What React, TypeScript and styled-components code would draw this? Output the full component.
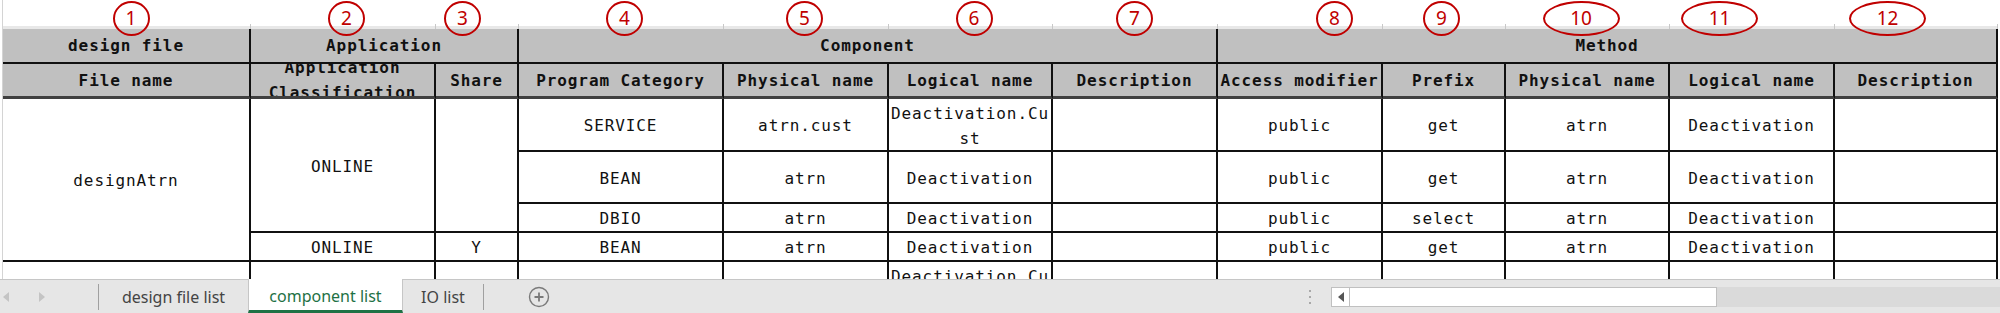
import styled, { createGlobalStyle } from 'styled-components';

const COLS = [248, 185, 83, 205, 165, 164, 165, 165, 123, 164, 165, 163];
const ROWS = [29, 35, 35, 53, 52, 29, 29, 53];

type Cell = { text: string; col: number; row: number; cs?: number; rs?: number };

const markers = [
	{ label: '1', shift: 4 },
	{ label: '2', shift: 3 },
	{ label: '3', shift: -15 },
	{ label: '4', shift: 3 },
	{ label: '5', shift: -2 },
	{ label: '6', shift: 3 },
	{ label: '7', shift: -1 },
	{ label: '8', shift: 34 },
	{ label: '9', shift: -3 },
	{ label: '10', shift: -7, wide: true },
	{ label: '11', shift: -33, wide: true },
	{ label: '12', shift: -29, wide: true },
];

const headTop: Cell[] = [
	{ text: 'design file', col: 1, row: 2 },
	{ text: 'Application', col: 2, row: 2, cs: 2 },
	{ text: 'Component', col: 4, row: 2, cs: 4 },
	{ text: 'Method', col: 8, row: 2, cs: 5 },
];

const headNames = [
	'File name', 'Application Classification', 'Share', 'Program Category', 'Physical name',
	'Logical name', 'Description', 'Access modifier', 'Prefix', 'Physical name', 'Logical name', 'Description',
];

const componentRow = (row: number, values: string[]): Cell[] =>
	values.map((text, i) => ({ text, col: 4 + i, row }));

const dataCells: Cell[] = [
	{ text: 'designAtrn', col: 1, row: 4, rs: 4 },
	{ text: 'ONLINE', col: 2, row: 4, rs: 3 },
	{ text: '', col: 3, row: 4, rs: 3 },
	...componentRow(4, ['SERVICE', 'atrn.cust', 'Deactivation.Cust', '', 'public', 'get', 'atrn', 'Deactivation', '']),
	...componentRow(5, ['BEAN', 'atrn', 'Deactivation', '', 'public', 'get', 'atrn', 'Deactivation', '']),
	...componentRow(6, ['DBIO', 'atrn', 'Deactivation', '', 'public', 'select', 'atrn', 'Deactivation', '']),
	{ text: 'ONLINE', col: 2, row: 7 },
	{ text: 'Y', col: 3, row: 7 },
	...componentRow(7, ['BEAN', 'atrn', 'Deactivation', '', 'public', 'get', 'atrn', 'Deactivation', '']),
	{ text: '', col: 1, row: 8 },
	{ text: '', col: 2, row: 8 },
	{ text: '', col: 3, row: 8 },
	...componentRow(8, ['SERVICE', 'atrn.cust', 'Deactivation.Cust', '', 'public', 'get', 'atrn', 'Deactivation', '']),
];

const GlobalStyle = createGlobalStyle`
	html, body {
		margin: 0;
		padding: 0;
		background: #fff;
	}
	body {
		width: 2000px;
		height: 313px;
		overflow: hidden;
	}
`;

const Page = styled.div`
	display: flex;
	flex-direction: column;
	width: 2000px;
	height: 313px;
`;

const SheetArea = styled.div`
	height: 279px;
	overflow: hidden;
	padding-left: 2px;
	background: #fff;
`;

const Grid = styled.div`
	display: grid;
	grid-template-columns: ${COLS.map((w) => `${w}px`).join(' ')};
	grid-template-rows: ${ROWS.map((h) => `${h}px`).join(' ')};
	border-left: 1px solid #d4d4d4;
	font-family: 'DejaVu Sans Mono', 'Liberation Mono', monospace;
	font-size: 16px;
	letter-spacing: 0.9px;
	color: #111;
`;

const Placed = styled.div<{ $col: number; $row: number; $cs?: number; $rs?: number }>`
	grid-column: ${(p) => `${p.$col} / span ${p.$cs ?? 1}`};
	grid-row: ${(p) => `${p.$row} / span ${p.$rs ?? 1}`};
	box-sizing: border-box;
	min-width: 0;
`;

const TopCell = styled(Placed)`
	position: relative;
	display: flex;
	justify-content: center;
	align-items: flex-start;
	background: linear-gradient(to bottom, #fff 0 26px, #e8e8e8 26px 29px);
	&::after {
		content: '';
		position: absolute;
		right: 0;
		bottom: 0;
		width: 1px;
		height: 5px;
		background: #c8c8c8;
	}
`;

const Marker = styled.span<{ $wide?: boolean; $shift: number }>`
	position: relative;
	z-index: 2;
	box-sizing: border-box;
	display: inline-flex;
	align-items: center;
	justify-content: center;
	width: ${(p) => (p.$wide ? 77 : 37)}px;
	height: 35px;
	margin-top: 1px;
	transform: translateX(${(p) => p.$shift}px);
	border: 2px solid #c00000;
	border-radius: 50%;
	color: #c00000;
	font-family: 'Noto Sans', 'Open Sans', sans-serif;
	font-size: 19px;
	letter-spacing: 0;
	line-height: 1;
`;

const Box = styled(Placed)`
	display: flex;
	align-items: center;
	justify-content: center;
	text-align: center;
	line-height: 25px;
	overflow: hidden;
	word-break: break-all;
	border-right: 2px solid #111;
`;

const HeadCell = styled(Box)<{ $thick?: boolean }>`
	background: #c0c0c0;
	font-weight: bold;
	word-break: normal;
	border-bottom: ${(p) => (p.$thick ? '3px solid #404040' : '2px solid #111')};
`;

const DataCell = styled(Box)`
	background: #fff;
	border-bottom: 2px solid #111;
	padding-top: 2px;
`;

const TabBar = styled.div`
	display: flex;
	align-items: stretch;
	height: 34px;
	box-sizing: border-box;
	background: #e6e6e6;
	border-top: 1px solid #c6c6c6;
	font-family: 'Noto Sans', 'Open Sans', sans-serif;
	font-size: 16px;
`;

const Nav = styled.div`
	display: flex;
	align-items: center;
	gap: 30px;
	width: 98px;
	padding-left: 3px;
	box-sizing: border-box;
`;

const Divider = styled.span`
	align-self: center;
	width: 1px;
	height: 26px;
	background: #a0a0a0;
`;

const Tab = styled.div<{ $active?: boolean; $width: number }>`
	display: flex;
	align-items: center;
	justify-content: center;
	width: ${(p) => p.$width}px;
	box-sizing: border-box;
	color: ${(p) => (p.$active ? '#1e7145' : '#444')};
	${(p) =>
		p.$active &&
		`
		margin-top: -1px;
		background: #fff;
		border-left: 1px solid #c6c6c6;
		border-right: 1px solid #c6c6c6;
		border-bottom: 3px solid #1e7145;
		padding-top: 3px;
	`}
`;

const AddButton = styled.div`
	display: flex;
	align-items: center;
	margin-left: 44px;
`;

const Spacer = styled.div`
	flex: 1;
`;

const Dots = styled.div`
	display: flex;
	flex-direction: column;
	justify-content: center;
	gap: 4px;
	width: 3px;
	margin-right: 19px;
	span {
		width: 2px;
		height: 2px;
		background: #a8a8a8;
	}
`;

const Scroll = styled.div`
	display: flex;
	align-self: center;
	width: 669px;
	height: 20px;
	background: #dadada;
`;

const ScrollButton = styled.div`
	display: flex;
	align-items: center;
	justify-content: center;
	width: 19px;
	box-sizing: border-box;
	background: #fff;
	border: 1px solid #c0c0c0;
`;

const Thumb = styled.div`
	width: 367px;
	box-sizing: border-box;
	background: #fff;
	border: 1px solid #c0c0c0;
	border-left: none;
`;

const Triangle = ({ dir, color }: { dir: 'left' | 'right'; color: string }) => (
	<svg width="6" height="10" viewBox="0 0 6 10">
		<path d={dir === 'left' ? 'M6 0 L0 5 L6 10 Z' : 'M0 0 L6 5 L0 10 Z'} fill={color} />
	</svg>
);

export default function App() {
	return (
		<Page>
			<GlobalStyle />
			<SheetArea>
				<Grid>
					{markers.map((m, i) => (
						<TopCell key={`t${i}`} $col={i + 1} $row={1}>
							<Marker $wide={m.wide} $shift={m.shift}>{m.label}</Marker>
						</TopCell>
					))}
					{headTop.map((c) => (
						<HeadCell key={`h1${c.col}`} $col={c.col} $row={c.row} $cs={c.cs}>{c.text}</HeadCell>
					))}
					{headNames.map((name, i) => (
						<HeadCell key={`h2${i}`} $col={i + 1} $row={3} $thick>{name}</HeadCell>
					))}
					{dataCells.map((c) => (
						<DataCell key={`d${c.row}-${c.col}`} $col={c.col} $row={c.row} $cs={c.cs} $rs={c.rs}>
							{c.text}
						</DataCell>
					))}
				</Grid>
			</SheetArea>
			<TabBar>
				<Nav>
					<Triangle dir="left" color="#c4c4c4" />
					<Triangle dir="right" color="#c4c4c4" />
				</Nav>
				<Divider />
				<Tab $width={149}>design file list</Tab>
				<Tab $width={155} $active>component list</Tab>
				<Tab $width={80}>IO list</Tab>
				<Divider />
				<AddButton>
					<svg width="22" height="22" viewBox="0 0 22 22">
						<circle cx="11" cy="11" r="9.5" fill="none" stroke="#7a7a7a" strokeWidth="1.4" />
						<path d="M11 6.5 V15.5 M6.5 11 H15.5" stroke="#7a7a7a" strokeWidth="1.8" />
					</svg>
				</AddButton>
				<Spacer />
				<Dots>
					<span />
					<span />
					<span />
				</Dots>
				<Scroll>
					<ScrollButton>
						<Triangle dir="left" color="#555" />
					</ScrollButton>
					<Thumb />
				</Scroll>
			</TabBar>
		</Page>
	);
}
